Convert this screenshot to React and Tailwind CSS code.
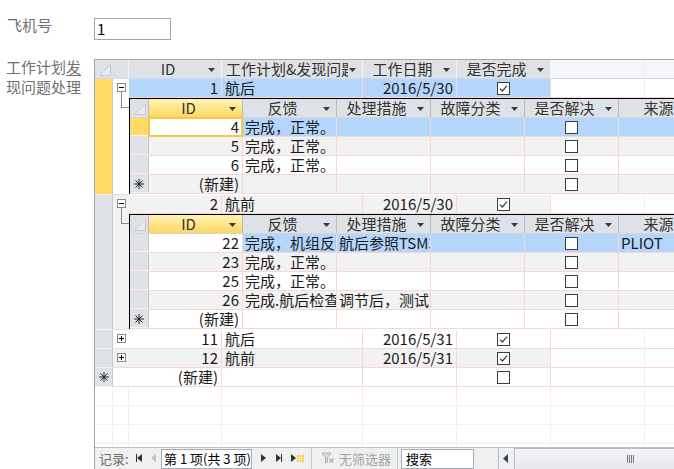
import React from 'react';

const BLUE = 'bg-[#b5d6fc]';
const ALT = 'bg-[#f2f2f2]';
const WHITE = 'bg-white';
const GRID = 'border-[#f6d6d6]';
const FAINT = 'border-[#f8eeee]';

function DropArrow() {
  return (
    <svg width="7" height="4" viewBox="0 0 7 4" className="absolute right-[6px] top-[8px]">
      <path d="M0 0H7L3.5 4Z" fill="#3a3a3a" />
    </svg>
  );
}

function CornerMark() {
  return (
    <svg width="12" height="12" viewBox="0 0 12 12">
      <path d="M11.5 0.5V11.5H0.5Z" fill="#e8ebef" stroke="#c4c9cf" strokeWidth="1" />
    </svg>
  );
}

function Check({ on }) {
  return (
    <span className="inline-flex h-[13px] w-[13px] items-center justify-center border border-[#3c3c3c] bg-white">
      {on && (
        <svg width="9" height="9" viewBox="0 0 9 9">
          <path d="M1 4.6L3.4 7L8 1.6" fill="none" stroke="#3c3c3c" strokeWidth="1.2" />
        </svg>
      )}
    </span>
  );
}

function Star() {
  return (
    <svg width="10" height="10" viewBox="0 0 10 10">
      <g stroke="#222" strokeWidth="1">
        <path d="M0 5H10" />
        <path d="M5 0V10" />
        <path d="M1.5 1.5L8.5 8.5" />
        <path d="M8.5 1.5L1.5 8.5" />
      </g>
    </svg>
  );
}

function Head({ w, text, yellow, left, dark }) {
  return (
    <div
      className={`relative flex h-full shrink-0 items-center border-r ${dark ? 'border-[#b6bbc2]' : 'border-[#f3f4f6]'} ${yellow ? 'bg-gradient-to-b from-[#fff4b4] to-[#ffd75c]' : 'bg-[#dee2e7]'} ${w}`}
    >
      <span
        className={`mr-[14px] min-w-0 flex-1 overflow-hidden whitespace-nowrap text-[#333] ${left ? 'pl-[4px] text-left' : 'text-center'}`}
      >
        {text}
      </span>
      <DropArrow />
    </div>
  );
}

function Cell({ w, bg, children, align = 'left' }) {
  const j = align === 'right' ? 'justify-end pr-[3px]' : align === 'center' ? 'justify-center' : 'justify-start pl-[2px]';
  return (
    <div className={`flex h-full shrink-0 items-center overflow-hidden whitespace-nowrap border-r ${GRID} ${bg} ${j} ${w}`}>
      {children}
    </div>
  );
}

function Selector({ cur, isNew, w = 'w-[18px]' }) {
  return (
    <div
      className={`flex h-full shrink-0 items-center justify-center border-r border-b border-r-[#c5c9cf] border-b-[#f4f4f4] ${cur ? 'bg-[#ffda66]' : 'bg-[#dfe3e8]'} ${w}`}
    >
      {isNew && <Star />}
    </div>
  );
}

function SubTable({ rows }) {
  return (
    <div className="mb-px border-l border-t border-black">
      <div className="flex h-[19px] border-b border-[#d3d6da]">
        <div className="flex h-full w-[19px] shrink-0 items-end justify-end border-r border-[#b6bbc2] bg-[#dee2e7] pb-[2px] pr-[2px]">
          <CornerMark />
        </div>
        <Head w="w-[94px]" text="ID" yellow dark />
        <Head w="w-[94px]" text="反馈" dark />
        <Head w="w-[94px]" text="处理措施" dark />
        <Head w="w-[94px]" text="故障分类" dark />
        <Head w="w-[94px]" text="是否解决" dark />
        <Head w="w-[94px]" text="来源" dark />
      </div>
      {rows.map((r, i) => {
        const bg = r.bg === 'blue' ? BLUE : r.bg === 'alt' ? ALT : WHITE;
        return (
          <div key={i} className={`flex h-[19px] border-b ${GRID}`}>
            <Selector w="w-[19px]" cur={r.cur} isNew={r.isNew} />
            <div
              className={`relative flex h-full w-[94px] shrink-0 items-center justify-end whitespace-nowrap border-r pr-[3px] ${GRID} ${r.focus || r.idWhite ? WHITE : bg}`}
            >
              {r.focus && <span className="absolute inset-[-1px] border-2 border-[#f2c94a]" />}
              <span className="relative">{r.isNew ? '(新建)' : r.id}</span>
            </div>
            <Cell w="w-[94px]" bg={bg}>{r.fb}</Cell>
            <Cell w="w-[94px]" bg={bg}>{r.act}</Cell>
            <Cell w="w-[94px]" bg={bg} />
            <Cell w="w-[94px]" bg={bg} align="center">
              <Check on={false} />
            </Cell>
            <Cell w="w-[94px]" bg={bg}>{r.src}</Cell>
          </div>
        );
      })}
    </div>
  );
}

function OuterCells({ bg, id, plan, date, done, isNew }) {
  return (
    <div className={`flex h-[19px] border-b ${GRID}`}>
      <Cell w="w-[93px]" bg={bg} align="right">{isNew ? '(新建)' : id}</Cell>
      <Cell w="w-[141px]" bg={bg}>
        <span className="pl-[1px]">{plan}</span>
      </Cell>
      <Cell w="w-[94px]" bg={bg} align="right">{date}</Cell>
      <Cell w="w-[94px]" bg={bg} align="center">
        <Check on={done} />
      </Cell>
      <div className={`h-full w-[94px] shrink-0 border-r ${FAINT} bg-white`} />
      <div className="h-full flex-1 bg-white" />
    </div>
  );
}

function ExpandBox({ open, line }) {
  return (
    <>
      <span className="absolute left-[4px] top-[4px] flex h-[9px] w-[9px] items-center justify-center border border-[#8a8a8a] bg-white">
        <span className="h-px w-[5px] bg-black" />
        {!open && <span className="absolute h-[5px] w-px bg-black" />}
      </span>
      {line && (
        <>
          <span className="absolute left-[8px] top-[13px] h-[16px] w-px bg-[#8a8a8a]" />
          <span className="absolute left-[8px] top-[28px] h-px w-[8px] bg-[#8a8a8a]" />
        </>
      )}
    </>
  );
}

function Block({ cur, bg, expBg, id, plan, date, done, sub }) {
  return (
    <div className="flex">
      <div
        className={`w-[18px] shrink-0 border-r border-b border-r-[#c5c9cf] border-b-[#f4f4f4] ${cur ? 'bg-[#ffda66]' : 'bg-[#dfe3e8]'}`}
      />
      <div className={`relative w-[16px] shrink-0 border-b ${GRID} ${expBg}`}>
        <ExpandBox open={!!sub} line={!!sub} />
      </div>
      <div className="min-w-0 flex-1">
        <OuterCells bg={bg} id={id} plan={plan} date={date} done={done} />
        {sub && <SubTable rows={sub} />}
      </div>
    </div>
  );
}

function EmptyRow() {
  return (
    <div className={`flex h-[19px] border-b ${FAINT}`}>
      <div className={`h-full w-[18px] shrink-0 border-r ${FAINT}`} />
      <div className={`h-full w-[16px] shrink-0 border-r ${FAINT}`} />
      <div className={`h-full w-[93px] shrink-0 border-r ${FAINT}`} />
      <div className={`h-full w-[141px] shrink-0 border-r ${FAINT}`} />
      <div className={`h-full w-[94px] shrink-0 border-r ${FAINT}`} />
      <div className={`h-full w-[94px] shrink-0 border-r ${FAINT}`} />
      <div className={`h-full w-[94px] shrink-0 border-r ${FAINT}`} />
      <div className="h-full flex-1" />
    </div>
  );
}

function NavBar() {
  return (
    <div className="flex h-[22px] items-start border-t border-[#b8bcc2] bg-[#eef0f2] text-[13px]">
      <span className="ml-[4px] mt-[3px] w-[37px] leading-[16px] text-[#6b6b6b]">记录:</span>
      <span className="mt-[6px] flex w-[15px] items-center">
        <span className="h-[8px] w-px bg-[#333]" />
        <svg width="5" height="8" viewBox="0 0 5 8"><path d="M5 0V8L0 4Z" fill="#333" /></svg>
      </span>
      <span className="mt-[6px] w-[10px]">
        <svg width="5" height="8" viewBox="0 0 5 8"><path d="M5 0V8L0 4Z" fill="#c3c3c3" /></svg>
      </span>
      <span className="mt-[1px] flex h-[20px] w-[91px] items-center border border-[#a9adb3] bg-white pl-[2px] text-black">
        第 1 项(共 3 项)
      </span>
      <span className="ml-[9px] mt-[6px] w-[15px]">
        <svg width="5" height="8" viewBox="0 0 5 8"><path d="M0 0V8L5 4Z" fill="#333" /></svg>
      </span>
      <span className="mt-[6px] flex w-[15px] items-center">
        <svg width="5" height="8" viewBox="0 0 5 8"><path d="M0 0V8L5 4Z" fill="#333" /></svg>
        <span className="h-[8px] w-px bg-[#333]" />
      </span>
      <span className="mt-[6px] flex w-[16px] items-center">
        <svg width="5" height="8" viewBox="0 0 5 8"><path d="M0 0V8L5 4Z" fill="#333" /></svg>
        <svg width="7" height="7" viewBox="0 0 7 7" className="ml-px">
          <rect width="7" height="7" fill="#f3c53a" />
          <path d="M0 2.5H7M0 4.5H7M2.5 0V7M4.5 0V7" stroke="#fff6d0" strokeWidth="0.8" />
        </svg>
      </span>
      <span className="ml-[4px] h-full w-px bg-[#c9ccd1]" />
      <span className="ml-[9px] mt-[4px] w-[17px]">
        <svg width="14" height="12" viewBox="0 0 14 12">
          <path d="M1 1H10L6.5 5.5V10L4.5 11V5.5Z" fill="#dcdcdc" stroke="#a8a8a8" strokeWidth="0.9" />
          <path d="M8.5 6.5L12.5 10.5M12.5 6.5L8.5 10.5" stroke="#a8a8a8" strokeWidth="1.2" />
        </svg>
      </span>
      <span className="ml-[1px] mt-[3px] leading-[16px] text-[#a3a3a3]">无筛选器</span>
      <span className="ml-[6px] h-full w-px bg-[#c9ccd1]" />
      <span className="ml-[3px] mt-[1px] flex h-[20px] w-[73px] items-center border border-[#a9adb3] bg-white pl-[4px] text-black">
        搜索
      </span>
      <span className="ml-[24px] h-full w-px bg-[#b8bcc2]" />
      <span className="ml-[4px] mt-[6px] w-[11px]">
        <svg width="5" height="9" viewBox="0 0 5 9"><path d="M5 0V9L0 4.5Z" fill="#34466b" /></svg>
      </span>
      <div className="relative h-full flex-1 border-l border-t border-[#b8bcc2] bg-gradient-to-b from-[#f4f5f7] to-[#e6e8eb]">
        <span className="absolute left-[112px] top-[6px] flex gap-[1px]">
          <span className="h-[8px] w-px bg-[#777]" />
          <span className="h-[8px] w-px bg-[#777]" />
          <span className="h-[8px] w-px bg-[#777]" />
          <span className="h-[8px] w-px bg-[#777]" />
        </span>
      </div>
    </div>
  );
}

export default function App() {
  const sub1 = [
    { id: '4', fb: '完成，正常。', bg: 'blue', cur: true, focus: true },
    { id: '5', fb: '完成，正常。', bg: 'alt' },
    { id: '6', fb: '完成，正常。', bg: 'white' },
    { isNew: true, bg: 'alt' },
  ];
  const sub2 = [
    { id: '22', fb: '完成，机组反映', act: '航后参照TSM34', src: 'PLIOT', bg: 'blue', idWhite: true },
    { id: '23', fb: '完成，正常。', bg: 'alt' },
    { id: '25', fb: '完成，正常。', bg: 'white' },
    { id: '26', fb: '完成.航后检查', act: '调节后，测试正常', bg: 'alt' },
    { isNew: true, bg: 'white' },
  ];

  return (
    <div className="h-[469px] w-[674px] overflow-hidden bg-white text-[15px] text-[#1a1a1a] [font-family:'Noto_Sans_CJK_SC','Noto_Sans',sans-serif]">
      <div className="flex pt-[18px]">
        <div className="-mt-[3px] w-[94px] shrink-0 pl-[7px] leading-[20px] text-[#707070]">飞机号</div>
        <div className="flex h-[22px] w-[77px] items-center border border-[#a5a5a5] pl-[2px] text-black">1</div>
      </div>

      <div className="mt-[19px] flex">
        <div className="-mt-[2px] w-[94px] shrink-0 pl-[6px] leading-[20px] text-[#707070]">
          <div>
            工作计划<span className="underline underline-offset-2">发</span>
          </div>
          <div>现问题处理</div>
        </div>

        <div className="flex h-[410px] min-w-0 flex-1 flex-col border-l border-t border-[#a5a5a5]">
          {/* header */}
          <div className="flex h-[19px] shrink-0 border-b border-[#d6d9dd]">
            <div className="flex h-full w-[34px] shrink-0 items-end border-r border-[#f3f4f6] bg-[#dee2e7] pb-[2px] pl-[4px]">
              <CornerMark />
            </div>
            <Head w="w-[93px]" text="ID" />
            <Head w="w-[141px]" text="工作计划&发现问题处理" left />
            <Head w="w-[94px]" text="工作日期" />
            <Head w="w-[94px]" text="是否完成" />
            <div className="h-full w-[94px] shrink-0 border-r border-[#ebecf2] bg-[#f5f6fa]" />
            <div className="h-full flex-1 bg-[#f5f6fa]" />
          </div>

          {/* body */}
          <div className="min-h-0 flex-1 overflow-hidden">
            <Block cur bg={BLUE} expBg={WHITE} id="1" plan="航后" date="2016/5/30" done sub={sub1} />
            <Block bg={ALT} expBg={ALT} id="2" plan="航前" date="2016/5/30" done sub={sub2} />
            <Block bg={WHITE} expBg={WHITE} id="11" plan="航后" date="2016/5/31" done />
            <Block bg={ALT} expBg={ALT} id="12" plan="航前" date="2016/5/31" done />
            <div className="flex">
              <div className="h-[19px] shrink-0">
                <Selector isNew />
              </div>
              <div className={`h-[19px] w-[16px] shrink-0 border-b ${GRID} bg-white`} />
              <div className="min-w-0 flex-1">
                <OuterCells bg={WHITE} isNew done={false} />
              </div>
            </div>
            <EmptyRow />
            <EmptyRow />
            <EmptyRow />
            <EmptyRow />
          </div>

          <NavBar />
        </div>
      </div>
    </div>
  );
}
